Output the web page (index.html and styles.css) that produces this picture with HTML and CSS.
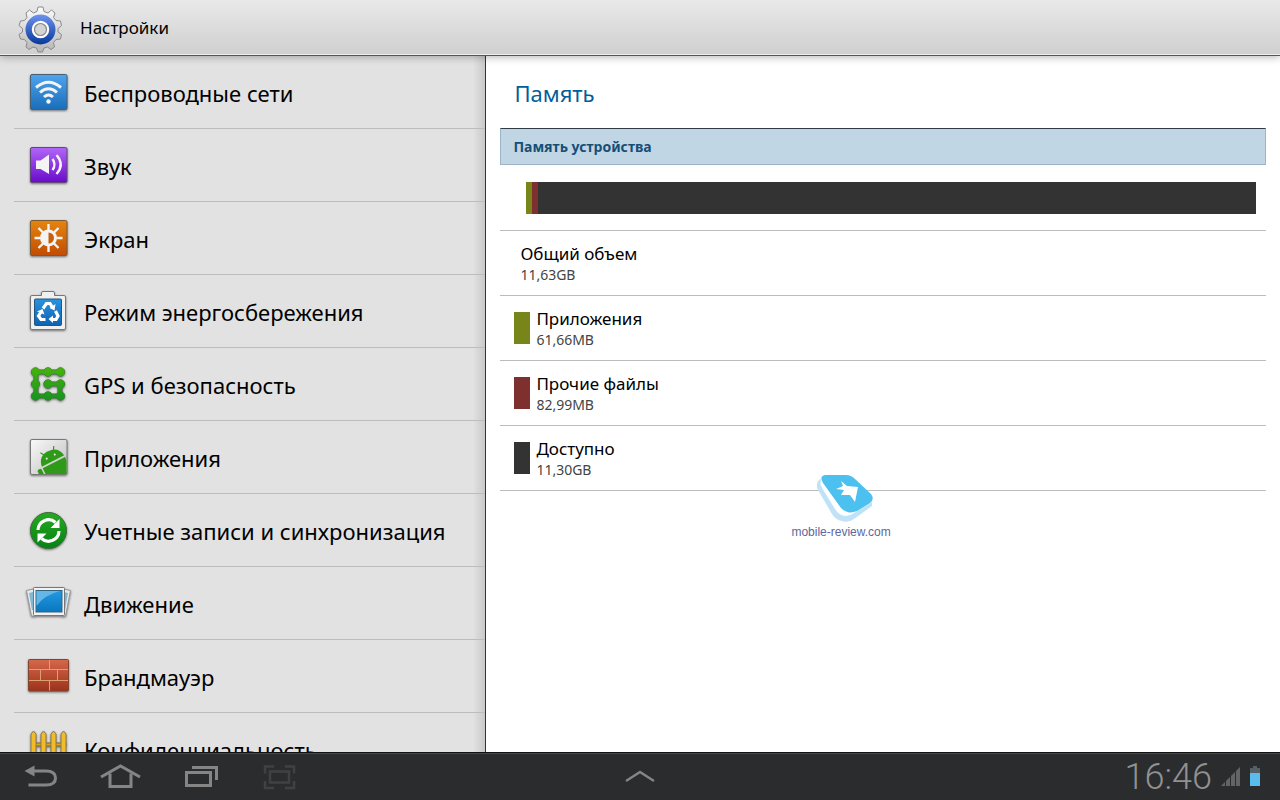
FILE: index.html
```html
<!DOCTYPE html>
<html lang="ru">
<head>
    <meta charset="UTF-8">
    <meta name="viewport" content="width=device-width, initial-scale=1.0">
    <title>Настройки</title>
    <link rel="stylesheet" href="styles.css">
</head>
<body>
    <header class="header">
        <svg class="header-icon" viewBox="0 0 48 48" aria-hidden="true">
            <defs>
                <linearGradient id="gGear" x1="0" y1="0" x2="0" y2="1"><stop offset="0" stop-color="#fdfdfd"/><stop offset="1" stop-color="#b5b5b5"/></linearGradient>
                <linearGradient id="gRing" x1="0" y1="0" x2="0" y2="1"><stop offset="0" stop-color="#6f93ee"/><stop offset="1" stop-color="#06389a"/></linearGradient>
            </defs>
            <g fill="url(#gGear)" stroke="#8a8a8a" stroke-width="1" stroke-linejoin="round">
                <path d="M21 7.500 L22 3 H27 L28 7.500 L32 9 L35.500 6 L39 9 L37.500 13.500 L40 16.500 L44.500 17 L45.500 21.500 L42 24.500 L42 28 L45.500 30.500 L44.500 35 L40 35.500 L37.500 38.500 L38.500 43 L35 45.500 L31.500 43 L28 44 L26.500 48 L22 48 L20.500 44 L17 43 L13 45.500 L10 43 L11 38.500 L8.500 35.500 L4.500 35 L3 30.500 L6.500 28 L6.500 24.500 L3 21.500 L4.500 17 L8.500 16.500 L11 13.500 L10 9 L13.500 6 L17.500 9 Z" transform="translate(0 -1)"/>
            </g>
            <circle cx="24.500" cy="24.500" r="15" fill="url(#gRing)"/>
            <circle cx="24.500" cy="24.500" r="7.500" fill="#e6e6e6" stroke="#fff" stroke-width="2.500"/>
            <circle cx="24.500" cy="24.500" r="6" fill="#d4d4d4" stroke="#888" stroke-width="1.200"/>
        </svg>
        <h1 class="header-title">Настройки</h1>
    </header>

    <div class="content">
        <nav class="sidebar">
            <ul class="menu">
                <li class="menu-item"><a class="menu-link" href="#wireless">
                    <svg class="menu-icon" viewBox="0 0 48 48" aria-hidden="true">
                        <defs><linearGradient id="gBlue" x1="0" y1="0" x2="0" y2="1"><stop offset="0" stop-color="#4fa4ee"/><stop offset="1" stop-color="#1a6db8"/></linearGradient></defs>
                        <rect x="6.500" y="5.500" width="36.500" height="35" rx="1.500" fill="url(#gBlue)" stroke="#4a6075"/>
                        <g fill="none" stroke="#f4f4f4" stroke-width="3">
                            <path d="M12 18.500 Q24.500 8 37 18.500"/>
                            <path d="M16 23.500 Q24.500 16 33 23.500"/>
                            <path d="M20 28 Q24.500 24 29 28"/>
                        </g>
                        <circle cx="24.500" cy="32.500" r="2.200" fill="#f4f4f4"/>
                    </svg>
                    <span class="menu-label">Беспроводные сети</span>
                </a></li>
                <li class="menu-item"><a class="menu-link" href="#sound">
                    <svg class="menu-icon" viewBox="0 0 48 48" aria-hidden="true">
                        <defs><linearGradient id="gViolet" x1="0" y1="0" x2="0" y2="1"><stop offset="0" stop-color="#b166f8"/><stop offset="1" stop-color="#6a0acb"/></linearGradient></defs>
                        <rect x="6.500" y="5.500" width="36.500" height="35" rx="1.500" fill="url(#gViolet)" stroke="#5f4a75"/>
                        <path d="M12 18.500 H16.500 L25 12.500 V32 L16.500 27 H12 Z" fill="#f4f4f4"/>
                        <g fill="none" stroke="#f4f4f4" stroke-width="2.400">
                            <path d="M28.500 17 Q32.500 22.500 28.500 28"/>
                            <path d="M32.500 13 Q41 22.500 32.500 32"/>
                        </g>
                    </svg>
                    <span class="menu-label">Звук</span>
                </a></li>
                <li class="menu-item"><a class="menu-link" href="#screen">
                    <svg class="menu-icon" viewBox="0 0 48 48" aria-hidden="true">
                        <defs><linearGradient id="gOrange" x1="0" y1="0" x2="0" y2="1"><stop offset="0" stop-color="#e58510"/><stop offset="1" stop-color="#c04d04"/></linearGradient></defs>
                        <rect x="6.500" y="5.500" width="36.500" height="35" rx="1.500" fill="url(#gOrange)" stroke="#7a5a35"/>
                        <path d="M24.500 9 V15 M24.500 31 V37 M10.500 23 H16.500 M32.500 23 H38.500 M14.500 13 L19 17.500 M30 28.500 L34.500 33 M34.500 13 L30 17.500 M19 28.500 L14.500 33" stroke="#f4f4f4" stroke-width="2.400"/>
                        <circle cx="24.500" cy="23" r="8.500" fill="#f4f4f4"/>
                        <path d="M24.500 17.500 A5.500 5.500 0 0 1 24.500 28.500 Z" fill="#c8600b"/>
                    </svg>
                    <span class="menu-label">Экран</span>
                </a></li>
                <li class="menu-item"><a class="menu-link" href="#power">
                    <svg class="menu-icon" viewBox="0 0 48 48" aria-hidden="true">
                        <defs><linearGradient id="gPower" x1="0" y1="0" x2="0" y2="1"><stop offset="0" stop-color="#2b93dc"/><stop offset="1" stop-color="#0c62b4"/></linearGradient></defs>
                        <path d="M8 7.500 H17.500 V5 Q17.500 3.500 19 3.500 H29 Q30.500 3.500 30.500 5 V7.500 H40 Q41.500 7.500 41.500 9 V40 Q41.500 41.500 40 41.500 H8 Q6.500 41.500 6.500 40 V9 Q6.500 7.500 8 7.500 Z" fill="#f0f0f0" stroke="#777"/>
                        <rect x="10.500" y="11" width="27" height="26.500" rx="1" fill="url(#gPower)" stroke="#24567f"/>
                        <g fill="none" stroke="#fff" stroke-width="3.200">
                            <path d="M19 20.500 L22.500 15.500 H26 L28.500 19.500"/>
                            <path d="M31.500 23 L34 28 L32 31.500 H27.500"/>
                            <path d="M21.500 31.500 H17 L14.500 28 L17 24"/>
                        </g>
                        <path d="M31.500 16 L30.500 22.500 L25.500 20 Z M29 27.500 V35 L24.500 31 Z M13 23.500 L18.500 21 L20.500 26.500 Z" fill="#fff"/>
                    </svg>
                    <span class="menu-label">Режим энергосбережения</span>
                </a></li>
                <li class="menu-item"><a class="menu-link" href="#security">
                    <svg class="menu-icon" viewBox="0 0 48 48" aria-hidden="true">
                        <defs><linearGradient id="gGreen" gradientUnits="userSpaceOnUse" x1="0" y1="6" x2="0" y2="42"><stop offset="0" stop-color="#45b50b"/><stop offset="1" stop-color="#139021"/></linearGradient></defs>
                        <g stroke="#3b7734" fill="#3b7734">
                            <path d="M36 11 H12 V35 H36 V23 H24.500" fill="none" stroke-width="5"/>
                            <circle cx="11.500" cy="11" r="4.200"/><circle cx="24" cy="11" r="4.200"/><circle cx="36.500" cy="11" r="4.200"/>
                            <circle cx="11.500" cy="23" r="4.200"/><circle cx="24" cy="23" r="4.200"/><circle cx="36.500" cy="23" r="4.200"/>
                            <circle cx="11.500" cy="35" r="4.200"/><circle cx="24" cy="35" r="4.200"/><circle cx="36.500" cy="35" r="4.200"/>
                        </g>
                        <path d="M36 11 H12 V35 H36 V23 H24.500" fill="none" stroke="url(#gGreen)" stroke-width="3.500"/>
                        <g fill="url(#gGreen)">
                            <circle cx="11.500" cy="11" r="4"/><circle cx="24" cy="11" r="4"/><circle cx="36.500" cy="11" r="4"/>
                            <circle cx="11.500" cy="23" r="4"/><circle cx="24" cy="23" r="4"/><circle cx="36.500" cy="23" r="4"/>
                            <circle cx="11.500" cy="35" r="4"/><circle cx="24" cy="35" r="4"/><circle cx="36.500" cy="35" r="4"/>
                        </g>
                    </svg>
                    <span class="menu-label">GPS и безопасность</span>
                </a></li>
                <li class="menu-item"><a class="menu-link" href="#apps">
                    <svg class="menu-icon" viewBox="0 0 48 48" aria-hidden="true">
                        <defs>
                            <linearGradient id="gSilver" x1="0" y1="0" x2="1" y2="1"><stop offset="0" stop-color="#fafafa"/><stop offset="1" stop-color="#bcbcbc"/></linearGradient>
                            <clipPath id="appClip"><rect x="7" y="6" width="35.500" height="34"/></clipPath>
                        </defs>
                        <rect x="6.500" y="5.500" width="36.500" height="35" rx="1.500" fill="url(#gSilver)" stroke="#777"/>
                        <g clip-path="url(#appClip)">
                            <g transform="translate(29 27) rotate(-27)">
                                <path d="M-12.500 0 Q-11 -11 0 -11 Q11 -11 12.500 0 Z" fill="#2f9a17"/>
                                <path d="M-12.500 1.800 H12.500 V24 H-12.500 Z" fill="#2f9a17"/>
                                <rect x="-18.500" y="1" width="4.500" height="14" rx="2" fill="#2f9a17"/>
                                <rect x="14" y="1" width="4.500" height="14" rx="2" fill="#2f9a17"/>
                                <path d="M-5 -9 L-7.500 -13 M5 -9 L7.500 -13" stroke="#2f9a17" stroke-width="1.200"/>
                                <circle cx="-4.500" cy="-5" r="1" fill="#eee"/><circle cx="4.500" cy="-5" r="1" fill="#eee"/>
                            </g>
                        </g>
                    </svg>
                    <span class="menu-label">Приложения</span>
                </a></li>
                <li class="menu-item"><a class="menu-link" href="#accounts">
                    <svg class="menu-icon" viewBox="0 0 48 48" aria-hidden="true">
                        <defs><linearGradient id="gSync" x1="0" y1="0" x2="0" y2="1"><stop offset="0" stop-color="#28a823"/><stop offset="1" stop-color="#078213"/></linearGradient></defs>
                        <circle cx="24.500" cy="23.500" r="18" fill="url(#gSync)" stroke="#3d6b3a"/>
                        <g fill="none" stroke="#fff" stroke-width="3.200">
                            <path d="M14 23 A10.500 10.500 0 0 1 31.500 15.500"/>
                            <path d="M35 24 A10.500 10.500 0 0 1 17.500 31.500"/>
                        </g>
                        <path d="M35.500 12 V21 H26.500 Z M13.500 35.500 V26.500 H22.500 Z" fill="#fff"/>
                    </svg>
                    <span class="menu-label">Учетные записи и синхронизация</span>
                </a></li>
                <li class="menu-item"><a class="menu-link" href="#motion">
                    <svg class="menu-icon" viewBox="0 0 48 48" aria-hidden="true">
                        <defs><linearGradient id="gPhoto" x1="0" y1="0" x2="0" y2="1"><stop offset="0" stop-color="#2599e0"/><stop offset="1" stop-color="#0877be"/></linearGradient></defs>
                        <path d="M2.500 10.500 L12 8.500 V36 H7.500 Z M46.500 10.500 L37 8.500 V36 H41.500 Z" fill="#e8e8e8" stroke="#999"/>
                        <path d="M5 13 L9 12 V30 L8 30 Z M44 13 L40 12 V30 L41 30 Z" fill="#80b9d5"/>
                        <rect x="9.500" y="7.500" width="31" height="28" rx="1" fill="#f2f2f2" stroke="#777"/>
                        <rect x="12" y="10.500" width="26" height="21.500" fill="url(#gPhoto)" stroke="#336380"/>
                        <path d="M12.500 11 H36 Q20 15 12.500 26 Z" fill="#64b6e6"/>
                    </svg>
                    <span class="menu-label">Движение</span>
                </a></li>
                <li class="menu-item"><a class="menu-link" href="#firewall">
                    <svg class="menu-icon" viewBox="0 0 48 48" aria-hidden="true">
                        <defs><linearGradient id="gBrick" x1="0" y1="0" x2="0" y2="1"><stop offset="0" stop-color="#d5684a"/><stop offset="1" stop-color="#9d321c"/></linearGradient></defs>
                        <rect x="4.500" y="6.500" width="40" height="31.500" rx="1" fill="url(#gBrick)" stroke="#80442f"/>
                        <path d="M5 16.500 H44 M5 27.500 H44 M25.500 7 V16.500 M16.500 16.500 V27.500 M33.500 16.500 V27.500 M25.500 27.500 V37.500" fill="none" stroke="#dca070"/>
                    </svg>
                    <span class="menu-label">Брандмауэр</span>
                </a></li>
                <li class="menu-item"><a class="menu-link" href="#privacy">
                    <svg class="menu-icon" viewBox="0 0 48 48" aria-hidden="true">
                        <path d="M8 17 H42 V20 H8 Z M8 33 H42 V36 H8 Z" fill="#dfa312" stroke="#806a30"/>
                        <path d="M7 42 V8 L9.500 5 L12 8 V42 Z M17 42 V8 L19.500 5 L22 8 V42 Z M27 42 V8 L29.500 5 L32 8 V42 Z M37 42 V8 L39.500 5 L42 8 V42 Z" fill="#f0bd28" stroke="#8f7a48"/>
                    </svg>
                    <span class="menu-label">Конфиденциальность</span>
                </a></li>
            </ul>
        </nav>

        <main class="panel">
            <h2 class="panel-title">Память</h2>
            <h3 class="section-title">Память устройства</h3>
            <div class="usage">
                <div class="usage-bar">
                    <span class="usage-part apps"></span>
                    <span class="usage-part files"></span>
                </div>
            </div>
            <ul class="stats">
                <li class="stat total">
                    <div>
                        <div class="stat-name">Общий объем</div>
                        <div class="stat-value">11,63GB</div>
                    </div>
                </li>
                <li class="stat">
                    <span class="swatch apps"></span>
                    <div>
                        <div class="stat-name">Приложения</div>
                        <div class="stat-value">61,66MB</div>
                    </div>
                </li>
                <li class="stat">
                    <span class="swatch files"></span>
                    <div>
                        <div class="stat-name">Прочие файлы</div>
                        <div class="stat-value">82,99MB</div>
                    </div>
                </li>
                <li class="stat">
                    <span class="swatch free"></span>
                    <div>
                        <div class="stat-name">Доступно</div>
                        <div class="stat-value">11,30GB</div>
                    </div>
                </li>
            </ul>
            <div class="watermark">
                <svg class="watermark-logo" viewBox="0 0 60 50" aria-hidden="true">
                    <path d="M5 5 Q0 9 3 16 L17 40 Q21 46 27 47 Q33 49 39 45 L57 32 V25 Z" fill="#bfe2f8"/>
                    <path d="M7 4 Q4 8 7 14 L20 35 Q24 42 31 42 Q35 42 39 39 L57 28 V23 Z" fill="#fff"/>
                    <path d="M10 1 H31 Q36 1 40 5 L56 20 Q60 25 55 29 L42 37 Q33 41 26 34 L8 9 Q4 2 10 1 Z" fill="#4cc0ee"/>
                    <path d="M26 7 L32 12 L43 13 L40 28 L35 21 L26 21 L29 16 L21 15 L28 12 Z" fill="#fff"/>
                </svg>
                <span class="watermark-text">mobile-review.com</span>
            </div>
        </main>
    </div>

    <footer class="navbar">
        <div class="nav-buttons">
            <button class="nav-btn" type="button" aria-label="Назад">
                <svg width="40" height="28" viewBox="0 0 40 28">
                    <path d="M11 8 H26 Q35.500 8 35.500 15 Q35.500 22 26 22 H8.500" fill="none" stroke="#858585" stroke-width="3"/>
                    <path d="M4.500 8 L14.500 2.500 V13.500 Z" fill="#858585"/>
                </svg>
            </button>
            <button class="nav-btn" type="button" aria-label="Домой">
                <svg width="40" height="28" viewBox="0 0 40 28" fill="none" stroke="#858585" stroke-width="3">
                    <path d="M1 14 L20.500 3 L40 14"/>
                    <path d="M10 10.500 V23.500 H31 V10.500"/>
                </svg>
            </button>
            <button class="nav-btn" type="button" aria-label="Недавние приложения">
                <svg width="40" height="28" viewBox="0 0 40 28" fill="none" stroke="#858585" stroke-width="3">
                    <rect x="6.500" y="9.500" width="24" height="13"/>
                    <path d="M12 4.500 H36.500 V17"/>
                </svg>
            </button>
            <button class="nav-btn" type="button" aria-label="Снимок экрана">
                <svg width="40" height="28" viewBox="0 0 40 28" fill="none" stroke="#404143" stroke-width="2.500">
                    <rect x="10" y="8.500" width="19" height="11"/>
                    <path d="M5 10.500 V3.500 H14 M25 3.500 H34 V10.500 M5 18 V25 H14 M25 25 H34 V18"/>
                </svg>
            </button>
        </div>
        <button class="nav-up" type="button" aria-label="Мини-приложения">
            <svg width="32" height="14" viewBox="0 0 32 14"><path d="M2 11 L16 2 L30 11" fill="none" stroke="#858585" stroke-width="2.400"/></svg>
        </button>
        <div class="status">
            <time class="clock">16:46</time>
            <svg width="20" height="20" viewBox="0 0 20 20" aria-hidden="true">
                <path d="M0 19 L4 15 V19 Z M5 14 L9 10 V19 H5 Z M10 9 L14 5 V19 H10 Z M15 4 L19 0 V19 H15 Z" fill="#636466"/>
            </svg>
            <svg width="10" height="20" viewBox="0 0 10 20" aria-hidden="true">
                <path d="M3 -1 H7 V1 H10 V6 H0 V1 H3 Z" fill="#556066"/>
                <path d="M0 6 H10 V19 H0 Z" fill="#59bcec"/>
            </svg>
        </div>
    </footer>
</body>
</html>
```

FILE: styles.css
```css
html, body {
    margin: 0;
    padding: 0;
    height: 100%;
}
body {
    display: flex;
    flex-direction: column;
    overflow: hidden;
    font-family: "Noto Sans", "Open Sans", sans-serif;
    color: #000;
    background: #fff;
}
h1, h2, h3, ul {
    margin: 0;
    padding: 0;
    font-weight: normal;
    list-style: none;
}
.header {
    flex: none;
    display: flex;
    align-items: center;
    gap: 16px;
    height: 55px;
    padding: 0 16px;
    background: linear-gradient(#e9e9e9, #cfcfcf);
    border-bottom: 1px solid #555;
    box-shadow: inset 0 -1px #eee, 0 1px 8px rgba(0, 0, 0, 0.3);
    position: relative;
    z-index: 1;
}
.header-icon {
    width: 48px;
    height: 48px;
    margin-top: 2px;
}
.header-title {
    font-size: 17px;
}
.content {
    flex: 1;
    min-height: 0;
    display: flex;
}

/* left menu */
.sidebar {
    width: 38%;
    box-sizing: border-box;
    overflow: hidden;
    background: linear-gradient(to left, #c9c9c9, #e2e2e2 12px);
    border-right: 1px solid #333;
}
.menu {
    padding-left: 14px;
}
.menu-item {
    border-bottom: 1px solid #bcbcbc;
}
.menu-link {
    display: flex;
    align-items: center;
    gap: 12px;
    height: 70px;
    padding: 2px 0 0 10px;
    color: #000;
    text-decoration: none;
}
.menu-icon {
    flex: none;
    width: 48px;
    height: 48px;
    filter: drop-shadow(0 1px 1px rgba(0, 0, 0, 0.5));
}
.menu-label {
    font-size: 22px;
    white-space: nowrap;
}

/* right panel */
.panel {
    flex: 1;
    position: relative;
    padding: 0 14px;
    overflow: hidden;
}
.panel-title {
    padding: 2px 0 0 14px;
    font-size: 22px;
    line-height: 70px;
    color: #025e97;
}
.section-title {
    padding: 0 12px;
    font-size: 14px;
    font-weight: bold;
    line-height: 35px;
    color: #164f76;
    background: #c1d6e5;
    border: 1px solid #9bb5c6;
    border-top: 1px solid #303b44;
}
.usage {
    padding: 17px 10px 16px 26px;
    border-bottom: 1px solid #bcbcbc;
}
.usage-bar {
    display: flex;
    height: 32px;
    background: #333;
}
.usage-part {
    width: 6px;
}
.apps {
    background: #788519;
}
.files {
    background: #7e302f;
}
.free {
    background: #333;
}
.stat {
    display: flex;
    align-items: center;
    gap: 6px;
    height: 64px;
    padding-left: 14px;
    border-bottom: 1px solid #bcbcbc;
}
.total {
    padding-left: 20px;
}
.swatch {
    width: 16px;
    height: 32px;
}
.stat-name {
    font-size: 17px;
    line-height: 24px;
}
.stat-value {
    font-size: 14px;
    line-height: 18px;
    color: #444;
}
.watermark {
    position: absolute;
    top: 418px;
    left: 305px;
    display: flex;
    flex-direction: column;
    align-items: center;
}
.watermark-logo {
    width: 60px;
    height: 50px;
    margin-left: 8px;
}
.watermark-text {
    font-family: "Liberation Sans", sans-serif;
    font-size: 12px;
    line-height: 16px;
    color: #5c68a0;
}

/* system bar */
.navbar {
    flex: none;
    display: grid;
    grid-template-columns: 1fr auto 1fr;
    align-items: center;
    height: 46px;
    background: #2b2c2e;
    border-top: 1px solid #111;
    box-shadow: inset 0 1px #46474a;
    padding: 1px 20px 0;
}
.nav-buttons {
    display: flex;
    gap: 40px;
}
.nav-btn, .nav-up {
    display: flex;
    padding: 0;
    border: none;
    background: none;
    cursor: pointer;
}
.nav-btn svg, .nav-up svg, .status svg {
    overflow: visible;
}
.status {
    display: flex;
    align-items: center;
    justify-content: flex-end;
    gap: 9px;
}
.clock {
    font-family: Roboto, "Liberation Sans", sans-serif;
    font-size: 36px;
    font-weight: 300;
    color: #919191;
}
```
